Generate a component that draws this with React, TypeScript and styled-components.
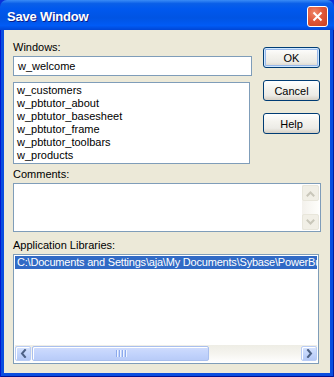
import React from "react";
import styled, { createGlobalStyle } from "styled-components";

const GlobalStyle = createGlobalStyle`
	html, body {
		margin: 0;
		padding: 0;
		background: #ffffff;
	}
	* {
		box-sizing: border-box;
	}
`;

const windows = [
	"w_customers",
	"w_pbtutor_about",
	"w_pbtutor_basesheet",
	"w_pbtutor_frame",
	"w_pbtutor_toolbars",
	"w_products",
];

const libPath = "C:\\Documents and Settings\\aja\\My Documents\\Sybase\\PowerBuilder 11.0\\Tutorial\\pbtutor.pbl";

const Chevron = ({ dir, color }: { dir: "up" | "down" | "left" | "right"; color: string }) => {
	const paths: Record<string, string> = {
		up: "M1.5 6.5 L4.5 3.5 L7.5 6.5",
		down: "M1.5 2.5 L4.5 5.5 L7.5 2.5",
		left: "M6 1 L3 4.5 L6 8",
		right: "M3 1 L6 4.5 L3 8",
	};
	return (
		<svg width="9" height="9" viewBox="0 0 9 9">
			<path d={paths[dir]} fill="none" stroke={color} strokeWidth="2" strokeLinecap="square" />
		</svg>
	);
};

const SaveWindow = () => {
	return (
		<Win>
			<GlobalStyle />
			<TitleBar>
				<Title>Save Window</Title>
				<CloseBox>
					<svg width="11" height="11" viewBox="0 0 11 11">
						<path d="M1.5 1.5 L9.5 9.5 M9.5 1.5 L1.5 9.5" stroke="#ffffff" strokeWidth="2" />
					</svg>
				</CloseBox>
			</TitleBar>
			<Frame>
				<Body>
					<TopRow>
						<LeftCol>
							<Label>Windows:</Label>
							<TextBox>w_welcome</TextBox>
							<ListBox>
								{windows.map((w) => (
									<Item key={w}>{w}</Item>
								))}
							</ListBox>
						</LeftCol>
						<Buttons>
							<Button $default>OK</Button>
							<Button>Cancel</Button>
							<Button>Help</Button>
						</Buttons>
					</TopRow>
					<Label $top={4}>Comments:</Label>
					<Comments>
						<CommentText />
						<VScroll>
							<DisabledBtn>
								<Chevron dir="up" color="#c9c7ba" />
							</DisabledBtn>
							<VTrack />
							<DisabledBtn>
								<Chevron dir="down" color="#c9c7ba" />
							</DisabledBtn>
						</VScroll>
					</Comments>
					<Label $top={7}>Application Libraries:</Label>
					<LibList>
						<LibRows>
							<Item $selected>{libPath}</Item>
						</LibRows>
						<HScroll>
							<ArrowBtn>
								<Chevron dir="left" color="#4d6185" />
							</ArrowBtn>
							<HTrack>
								<Thumb>
									<Grip>
										<i />
										<i />
										<i />
										<i />
									</Grip>
								</Thumb>
							</HTrack>
							<ArrowBtn>
								<Chevron dir="right" color="#4d6185" />
							</ArrowBtn>
						</HScroll>
					</LibList>
				</Body>
			</Frame>
		</Win>
	);
};

const Win = styled.div`
	width: 334px;
	height: 377px;
	display: flex;
	flex-direction: column;
	font-family: "Liberation Sans", Arial, sans-serif;
	font-size: 11px;
	color: #000000;
	background: #0831d9;
`;

const TitleBar = styled.div`
	height: 30px;
	flex: none;
	display: flex;
	align-items: center;
	justify-content: space-between;
	padding: 0 5px 0 7px;
	border-radius: 7px 7px 0 0;
	background: linear-gradient(
		to bottom,
		#3a8cf6 0%,
		#0a5fe8 12%,
		#0058ee 30%,
		#0054e3 60%,
		#005bf6 85%,
		#0046d5 100%
	);
`;

const Title = styled.span`
	font-family: "Liberation Sans", Arial, sans-serif;
	font-weight: bold;
	font-size: 13px;
	color: #ffffff;
	text-shadow: 1px 1px 0 #0a1e8a;
	letter-spacing: -0.2px;
	margin-top: 2px;
`;

const CloseBox = styled.div`
	width: 21px;
	height: 21px;
	margin-top: 2px;
	margin-right: 1px;
	display: flex;
	align-items: center;
	justify-content: center;
	border: 1px solid #ffffff;
	border-radius: 3px;
	background: radial-gradient(circle at 35% 30%, #f08a6c 0%, #e0583a 45%, #c8401f 100%);
`;

const Frame = styled.div`
	flex: 1;
	display: flex;
	padding: 0 4px 4px 4px;
	background: #0a4ee0;
	box-shadow: inset 1px 0 0 #0019cf, inset -1px 0 0 #001ea0, inset 0 -1px 0 #001090;
`;

const Body = styled.div`
	flex: 1;
	display: flex;
	flex-direction: column;
	padding: 11px 9px 9px 9px;
	background: #ece9d8;
`;

const TopRow = styled.div`
	display: flex;
	gap: 11px;
`;

const LeftCol = styled.div`
	width: 239px;
	display: flex;
	flex-direction: column;
`;

const Label = styled.div<{ $top?: number }>`
	height: 13px;
	line-height: 13px;
	margin-top: ${(p) => p.$top ?? 0}px;
	margin-bottom: 2px;
	white-space: nowrap;
`;

const TextBox = styled.div`
	height: 20px;
	line-height: 18px;
	padding-left: 4px;
	background: #ffffff;
	border: 1px solid #7f9db9;
`;

const ListBox = styled.div`
	width: 237px;
	height: 82px;
	margin-top: 6px;
	padding: 1px;
	background: #ffffff;
	border: 1px solid #7f9db9;
`;

const Item = styled.div<{ $selected?: boolean }>`
	height: 13px;
	line-height: 13px;
	padding-left: 2px;
	white-space: nowrap;
	overflow: hidden;
	letter-spacing: ${(p) => (p.$selected ? "-0.2px" : "0")};
	background: ${(p) => (p.$selected ? "#316ac5" : "transparent")};
	color: ${(p) => (p.$selected ? "#ffffff" : "#000000")};
`;

const Buttons = styled.div`
	display: flex;
	flex-direction: column;
	gap: 12px;
	margin-top: 6px;
`;

const Button = styled.div<{ $default?: boolean }>`
	width: 57px;
	height: 21px;
	display: flex;
	align-items: center;
	justify-content: center;
	border: 1px solid #003c74;
	border-radius: 3px;
	background: linear-gradient(to bottom, #ffffff 0%, #f4f3ee 40%, #ecebe6 75%, #d6d0c5 100%);
	box-shadow: ${(p) =>
		p.$default ? "inset 0 0 0 1px #cee7ff, inset 0 0 0 2px #98b8ea" : "none"};
`;

const Comments = styled.div`
	width: 308px;
	height: 49px;
	display: flex;
	padding: 1px;
	background: #ffffff;
	border: 1px solid #7f9db9;
`;

const CommentText = styled.div`
	flex: 1;
`;

const VScroll = styled.div`
	width: 17px;
	display: flex;
	flex-direction: column;
	background: linear-gradient(to right, #f3f1ec 0%, #fefefb 100%);
`;

const DisabledBtn = styled.div`
	height: 16px;
	display: flex;
	align-items: center;
	justify-content: center;
	border: 1px solid #e8e6db;
	border-radius: 2px;
	background: #f1efe6;
`;

const VTrack = styled.div`
	flex: 1;
`;

const LibList = styled.div`
	width: 306px;
	flex: 1;
	display: flex;
	flex-direction: column;
	padding: 1px;
	background: #ffffff;
	border: 1px solid #7f9db9;
`;

const LibRows = styled.div`
	flex: 1;
	overflow: hidden;
`;

const HScroll = styled.div`
	height: 17px;
	display: flex;
	align-items: center;
	background: linear-gradient(to bottom, #eeede5 0%, #f5f4ef 50%, #fefefe 100%);
`;

const ArrowBtn = styled.div`
	width: 16px;
	height: 15px;
	display: flex;
	align-items: center;
	justify-content: center;
	border: 1px solid #b9ccf5;
	border-radius: 2px;
	background: linear-gradient(to bottom, #d5e2fd 0%, #c1d3fb 60%, #b4c8f6 100%);
	box-shadow: inset 1px 1px 0 #ffffff;
`;

const HTrack = styled.div`
	flex: 1;
	height: 15px;
	padding-left: 1px;
`;

const Thumb = styled.div`
	width: 177px;
	height: 15px;
	display: flex;
	align-items: center;
	justify-content: center;
	border: 1px solid #a9bfee;
	border-radius: 2px;
	background: linear-gradient(to bottom, #d0dcfd 0%, #c3d4fc 50%, #b8cbf8 100%);
	box-shadow: inset 1px 1px 0 #ffffff;
`;

const Grip = styled.div`
	display: flex;
	gap: 1px;
	i {
		display: block;
		width: 1px;
		height: 7px;
		background: #8caaec;
		box-shadow: 1px 0 0 #eef4fe;
	}
	i + i {
		margin-left: 1px;
	}
`;

export default React.memo(SaveWindow);
